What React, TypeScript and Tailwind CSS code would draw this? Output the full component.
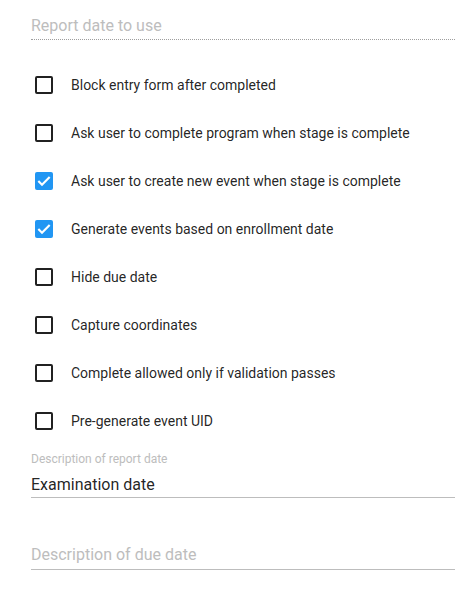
const options: { label: string; checked: boolean }[] = [
  { label: "Block entry form after completed", checked: false },
  { label: "Ask user to complete program when stage is complete", checked: false },
  { label: "Ask user to create new event when stage is complete", checked: true },
  { label: "Generate events based on enrollment date", checked: true },
  { label: "Hide due date", checked: false },
  { label: "Capture coordinates", checked: false },
  { label: "Complete allowed only if validation passes", checked: false },
  { label: "Pre-generate event UID", checked: false },
];

const CheckBox = ({ checked }: { checked: boolean }) =>
  checked ? (
    <div className="w-[18px] h-[18px] rounded-[2px] bg-[#2196f3] flex items-center justify-center">
      <svg width="16" height="16" viewBox="0 0 24 24">
        <path d="M3.5 12l5.5 5.5 11.5-11.5" fill="none" stroke="#fff" strokeWidth="3.2" />
      </svg>
    </div>
  ) : (
    <div className="w-[18px] h-[18px] rounded-[2px] border-2 border-[#212121]" />
  );

export default function App() {
  return (
    <div className="bg-white w-[455px] h-[601px] pl-[31px] font-['Roboto',sans-serif]">
      <div className="pt-[16px] pb-[3px] border-b border-dotted border-[#9e9e9e]">
        <div className="text-[16px] leading-5 text-[#bdbdbd]">Report date to use</div>
      </div>

      <div className="mt-[21px]">
        {options.map((o) => (
          <div key={o.label} className="flex items-center h-12">
            <div className="ml-[4px]">
              <CheckBox checked={o.checked} />
            </div>
            <span className="ml-[18px] text-[14px] text-[rgba(0,0,0,0.87)]">{o.label}</span>
          </div>
        ))}
      </div>

      <div className="mt-[7px] border-b border-[#bdbdbd]">
        <div className="text-[12px] leading-[14px] text-[#bdbdbd]">Description of report date</div>
        <div className="mt-[9px] pb-[2px] text-[16px] leading-5 text-[rgba(0,0,0,0.87)]">Examination date</div>
      </div>

      <div className="mt-[47px] border-b border-[#bdbdbd]">
        <div className="pb-[4px] text-[16px] leading-5 text-[#bdbdbd]">Description of due date</div>
      </div>
    </div>
  );
}
